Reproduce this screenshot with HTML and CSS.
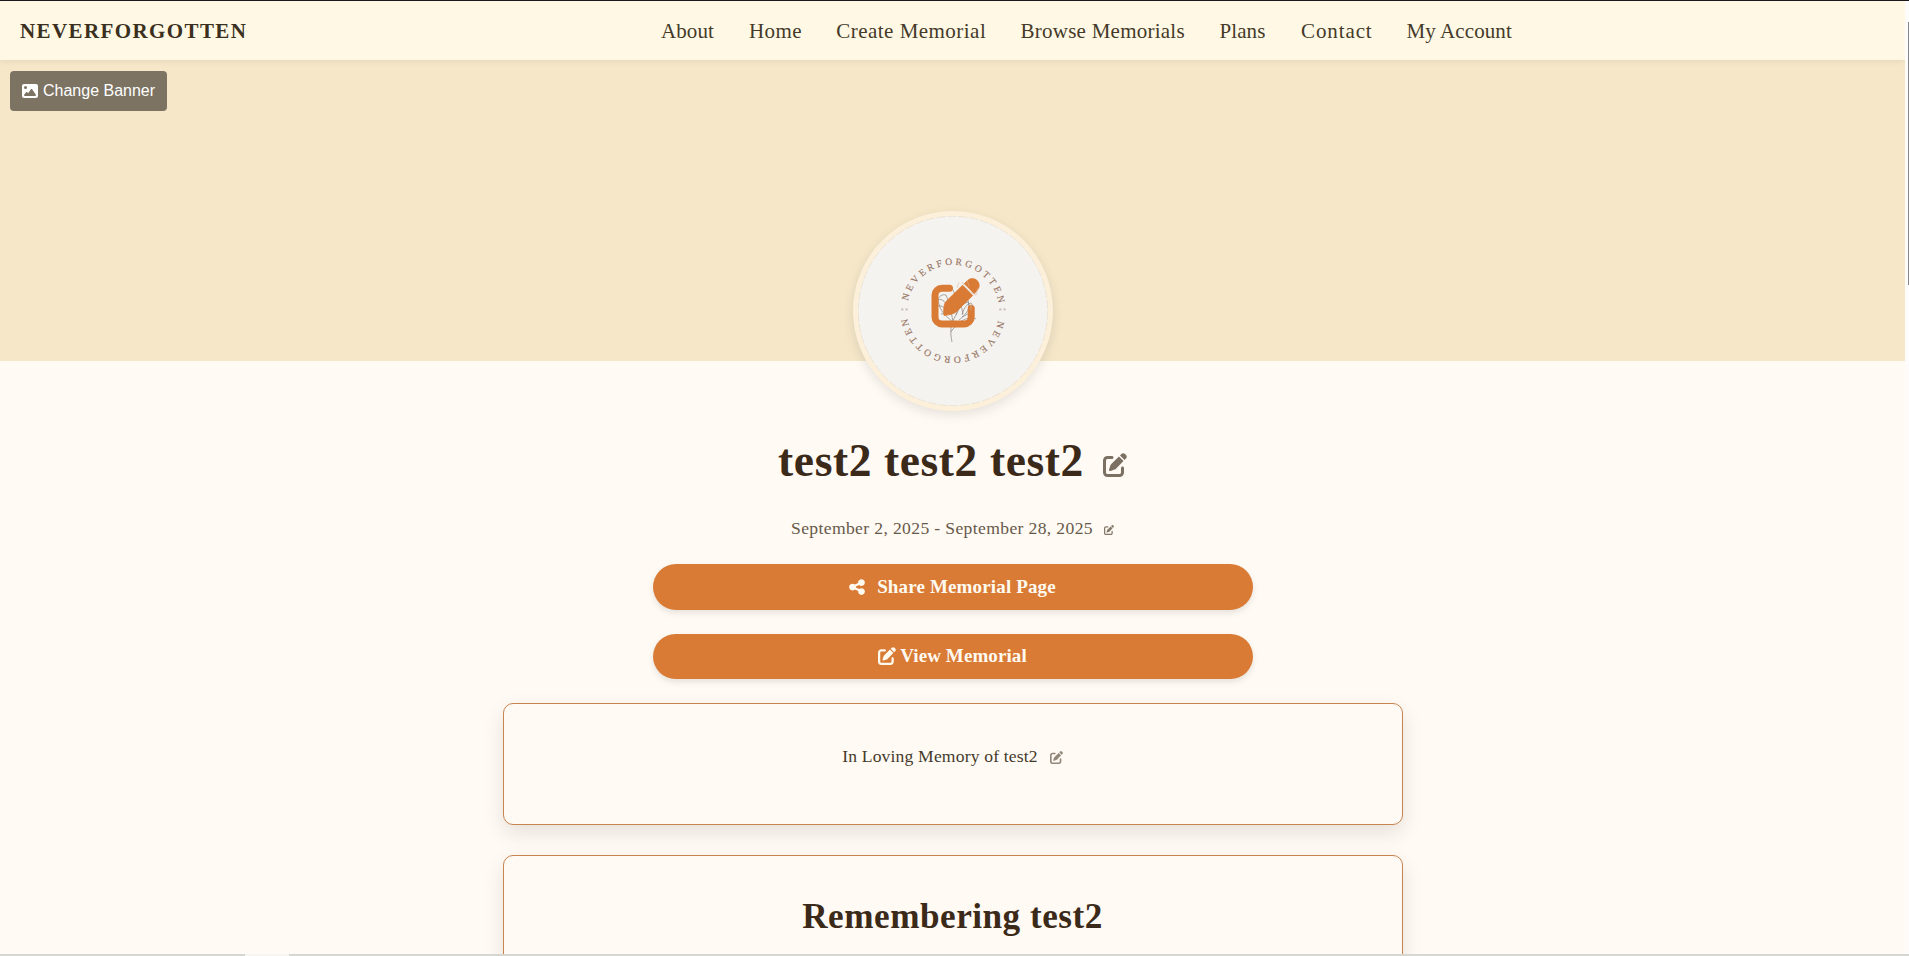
FILE: index.html
```html
<!DOCTYPE html>
<html lang="en">
<head>
<meta charset="utf-8">
<title>NeverForgotten</title>
<link rel="stylesheet" href="styles.css">
</head>
<body>
<svg class="defs" width="0" height="0">
  <symbol id="edit" viewBox="0 0 512 512"><path d="M471.6 21.7c-21.9-21.9-57.3-21.9-79.2 0L362.3 51.7l97.9 97.9 30.1-30.1c21.9-21.9 21.9-57.3 0-79.2L471.6 21.7zm-299.2 220c-6.1 6.1-10.8 13.6-13.5 21.9l-29.6 88.8c-2.9 8.6-.6 18.1 5.8 24.6s15.9 8.7 24.6 5.8l88.8-29.6c8.2-2.7 15.7-7.4 21.9-13.5L437.7 172.3 339.7 74.3 172.4 241.7zM96 64C43 64 0 107 0 160V416c0 53 43 96 96 96H352c53 0 96-43 96-96V320c0-17.7-14.3-32-32-32s-32 14.3-32 32v96c0 17.7-14.3 32-32 32H96c-17.7 0-32-14.3-32-32V160c0-17.7 14.3-32 32-32h96c17.7 0 32-14.3 32-32s-14.3-32-32-32H96z"/></symbol>
</svg>
<div class="window">
  <div class="page">
    <header class="header">
      <div class="brand">NEVERFORGOTTEN</div>
      <nav class="nav">
        <a class="about">About</a>
        <a class="home">Home</a>
        <a class="create">Create Memorial</a>
        <a class="browse">Browse Memorials</a>
        <a class="plans">Plans</a>
        <a class="contact">Contact</a>
        <a class="account">My Account</a>
      </nav>
    </header>
    <section class="banner">
      <button class="change-banner">
        <svg width="16" height="16" viewBox="0 0 512 512" fill="currentColor"><path d="M0 96C0 60.7 28.7 32 64 32H448c35.3 0 64 28.7 64 64V416c0 35.3-28.7 64-64 64H64c-35.3 0-64-28.7-64-64V96zM323.8 202.5c-4.5-6.6-11.9-10.5-19.8-10.5s-15.4 3.9-19.8 10.5l-87 127.6L170.7 297c-4.6-5.7-11.5-9-18.7-9s-14.2 3.3-18.7 9l-64 80c-5.8 7.2-6.9 17.1-2.9 25.4s12.4 13.6 21.6 13.6h96 32H424c8.9 0 17.1-4.9 21.2-12.8s3.6-17.4-1.4-24.7l-120-176zM112 192a48 48 0 1 0 0-96 48 48 0 1 0 0 96z"/></svg>
        <span>Change Banner</span>
      </button>
      <div class="avatar">
        <svg width="190" height="190" viewBox="0 0 190 190">
          <defs><path id="ring" d="M48.8 95a46.2 46.2 0 0 1 92.4 0"/></defs>
          <circle class="edge" cx="95" cy="95" r="94.7"/>
          <g class="ring-text">
            <text><textPath href="#ring" startOffset="10" textLength="127">NEVERFORGOTTEN</textPath></text>
            <text transform="rotate(180 95 94.8)"><textPath href="#ring" startOffset="10" textLength="127">NEVERFORGOTTEN</textPath></text>
          </g>
          <g class="marks">
            <circle cx="44.3" cy="93.4" r="1.2"/><circle cx="48.6" cy="93.4" r="1.2"/>
            <circle cx="142.3" cy="93.4" r="1.2"/><circle cx="146.6" cy="93.4" r="1.2"/>
          </g>
          <g class="flower">
            <path d="M94 126C92 116 92 109 98 99C103 91 97 78 93 70M93 116C96 111 98 110 101 109M95 106C88 100 82 96 80 84C81 80 84 78 88 79C91 86 93 94 95 106M80 84C84 82 88 86 92 94M80 90C84 89 88 92 92 99M83 98L91 97M98 99C101 92 104 88 110 86C113 91 109 98 101 104M104 99C106 91 109 88 113 87L116 92C113 96 109 99 104 101M102 106C108 102 113 101 118 103M103 89L105 98M110 84L112 95"/>
          </g>
          <path class="edit-frame" d="M91.5 72.2H84a7 7 0 0 0-7 7v21.7a7 7 0 0 0 7 7h22.2a7 7 0 0 0 7-7V92.5"/>
          <path class="edit-pen" d="M87.5 86L104.5 69.3L114.7 79.5L97.5 96.5Q95 98.3 86 99.5Q85 90 87.5 86ZM106.3 67.6L109.5 64.6a6.8 6.8 0 0 1 9.7 9.7L116.2 77.7Z"/>
          <path class="glint" d="M104 66L107 71L112 76L118 79L120 72M109 64L111 70M101 66L99 72M113 88V94"/>
        </svg>
      </div>
    </section>
    <main class="content">
      <h1 class="name"><span>test2 test2 test2</span><svg class="ico" width="24" height="24"><use href="#edit"/></svg></h1>
      <p class="dates"><span>September 2, 2025 - September 28, 2025</span><svg class="ico" width="10" height="10"><use href="#edit"/></svg></p>
      <button class="action share">
        <svg width="16" height="18" viewBox="0 0 448 512" fill="currentColor"><path d="M352 224c53 0 96-43 96-96s-43-96-96-96s-96 43-96 96c0 4 .2 8 .7 11.9l-94.1 47C145.4 170.2 121.9 160 96 160c-53 0-96 43-96 96s43 96 96 96c25.9 0 49.4-10.2 66.6-26.9l94.1 47c-.5 3.9-.7 7.8-.7 11.9c0 53 43 96 96 96s96-43 96-96s-43-96-96-96c-25.9 0-49.4 10.2-66.6 26.9l-94.1-47c.5-3.9 .7-7.8 .7-11.9s-.2-8-.7-11.9l94.1-47C302.6 213.8 326.1 224 352 224z"/></svg>
        <span>Share Memorial Page</span>
      </button>
      <button class="action view">
        <svg width="18" height="18" fill="currentColor"><use href="#edit"/></svg>
        <span>View Memorial</span>
      </button>
      <section class="card tribute">
        <p class="memory"><span>In Loving Memory of test2</span><svg class="ico" width="13" height="13"><use href="#edit"/></svg></p>
      </section>
      <section class="card story">
        <h2>Remembering test2</h2>
      </section>
    </main>
  </div>
  <div class="scrollbar"><div class="thumb"></div></div>
  <div class="taskbar"><div class="tab"></div></div>
</div>
</body>
</html>
```
FILE: styles.css
```css
* { box-sizing: border-box; }
body {
  margin: 0;
  background: #fffaf3;
  color: #3b2a1a;
  font-family: "Liberation Serif", "Times New Roman", serif;
  overflow: hidden;
}
button { border: 0; font: inherit; }
svg { display: block; flex: none; }
.defs { position: absolute; }
.window {
  display: grid;
  grid-template-columns: 1905px 4px;
  grid-template-rows: 953px 2px;
  height: 956px;
  border-top: 1px solid #1b1b1b;
}
.page { overflow: hidden; background: #fffaf3; }

.header {
  position: relative;
  z-index: 1;
  display: grid;
  grid-template-columns: 661px auto;
  align-items: center;
  height: 59px;
  padding-top: 2px;
  background: #fff8e5;
  box-shadow: 0 2px 6px rgba(0, 0, 0, .06);
}
.brand {
  padding-left: 20px;
  font-size: 21px;
  font-weight: 700;
  letter-spacing: 1.4px;
  color: #3b3020;
}
.nav { display: flex; gap: 35px; font-size: 21px; color: #443a29; white-space: nowrap; }
.about { width: 53px; letter-spacing: .1px; }
.home { width: 52.3px; letter-spacing: .4px; }
.create { width: 149.2px; letter-spacing: .47px; }
.browse { width: 164px; letter-spacing: .25px; }
.plans { width: 46.5px; letter-spacing: .1px; }
.contact { width: 70.5px; letter-spacing: .9px; }
.account { width: 107px; letter-spacing: .1px; }

.banner {
  display: flex;
  flex-direction: column;
  height: 301px;
  padding-top: 11px;
  background: #f5e7c8;
}
.change-banner {
  display: flex;
  flex: none;
  align-items: center;
  gap: 5px;
  width: 157px;
  height: 40px;
  margin-left: 10px;
  padding: 0 12px;
  border-radius: 4px;
  background: #7c7363;
  color: #fff;
  font: 16px "Liberation Sans", Arial, sans-serif;
  white-space: nowrap;
}
.avatar {
  position: relative;
  flex: none;
  width: 200px;
  height: 200px;
  margin: 100px auto 0;
  border: 5px solid #fdf0da;
  border-radius: 50%;
  background: #f4f3f0;
  box-shadow: 0 4px 12px rgba(0, 0, 0, .1);
}
.edge { fill: none; stroke: #e6d9c2; stroke-width: .6; stroke-dasharray: 9 2; }
.ring-text { font-size: 9.6px; fill: #987565; stroke: #987565; stroke-width: .15; }
.marks { fill: #cdbfb9; }
.flower { fill: none; stroke: #85807e; stroke-width: .7; }
.edit-frame { fill: none; stroke: #d97b35; stroke-width: 7; stroke-linecap: round; }
.edit-pen { fill: #d97b35; stroke: #d97b35; stroke-width: .8; stroke-linejoin: round; }
.glint { fill: none; stroke: #d8b9a0; stroke-width: .6; }

.content { display: flex; flex-direction: column; align-items: center; padding-top: 69px; }
.name, .dates, .memory { display: flex; align-items: center; margin: 0; white-space: nowrap; }
.name { height: 60px; font-size: 45.5px; letter-spacing: .6px; gap: 19px; }
.name .ico { margin-top: 9px; fill: #7c7063; }
.dates { height: 26px; margin: 25px 0 23px; font-size: 17.6px; letter-spacing: .36px; gap: 11px; color: #66594b; }
.dates .ico { margin-top: 4px; fill: #85796b; }
.action {
  display: flex;
  align-items: center;
  justify-content: center;
  width: 600px;
  border-radius: 30px;
  background: #d97b35;
  color: #fffaf0;
  font-size: 19px;
  font-weight: 700;
  box-shadow: 0 3px 6px rgba(0, 0, 0, .1);
}
.share { height: 46px; gap: 12px; margin-bottom: 24px; letter-spacing: .15px; }
.share svg { margin-top: -1px; }
.view { height: 45px; gap: 4px; margin-bottom: 24px; padding-bottom: 2px; letter-spacing: .1px; }
.view svg { margin-top: -1px; }
.card {
  width: 900px;
  border: 1px solid #c98350;
  border-radius: 10px;
  background: #fffaf3;
  box-shadow: 0 8px 20px rgba(0, 0, 0, .1);
}
.tribute { height: 122px; margin-bottom: 30px; padding-top: 39px; }
.memory { justify-content: center; height: 26px; font-size: 17.6px; letter-spacing: .16px; gap: 12px; color: #443a2c; }
.memory .ico { margin-top: 2px; fill: #92877b; }
.story { height: 200px; padding-top: 36px; text-align: center; }
.story h2 { margin: 0; font-size: 35.2px; line-height: 50px; letter-spacing: .5px; }

.scrollbar { background: #fdfcfb; padding: 21px 0 0 3px; }
.thumb { height: 263px; background: #85858a; }
.taskbar { grid-column: 1 / 3; background: #d7d7d1; padding-left: 245px; }
.tab { width: 44px; height: 2px; background: #f6f4ef; }
```
